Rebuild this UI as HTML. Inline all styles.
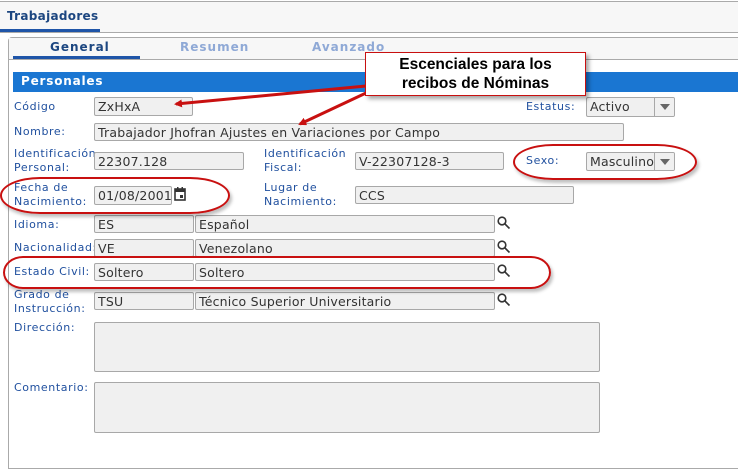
<!DOCTYPE html>
<html><head><meta charset="utf-8"><style>
body{margin:0;width:738px;height:449px;overflow:hidden;background:#fff;font-family:"DejaVu Sans",Verdana,sans-serif;position:relative}
.a{position:absolute}
.l{position:absolute;color:#1f4f9e;font-size:11px;letter-spacing:0.6px;line-height:14px;white-space:nowrap}
.i{position:absolute;background:#f0f0f0;border:1px solid #a8a8a8;border-radius:2px;box-sizing:border-box;font-size:12.5px;color:#333;padding-left:3px;padding-top:1px;line-height:15px;white-space:nowrap;overflow:hidden;font-family:"DejaVu Sans",sans-serif;letter-spacing:0.2px}
.dd{position:absolute;right:0;top:0;bottom:0;width:19px;border-left:1px solid #a8a8a8;background:#f0f0f0}
.dd:after{content:"";position:absolute;left:5px;top:6px;border-left:5px solid transparent;border-right:5px solid transparent;border-top:6px solid #666}
.ell{position:absolute;border:2px solid #c81010;border-radius:40px/50%;box-shadow:2px 3px 3px rgba(0,0,0,.25)}
</style></head><body>
<div class="a" style="left:0;top:1px;width:738px;height:30px;background:#f7f7f7;border-top:1px solid #aaa;border-bottom:1px solid #aaa"></div>
<div class="a" style="left:7px;top:9px;font-size:12px;font-weight:bold;color:#1c4680;letter-spacing:0.3px">Trabajadores</div>
<div class="a" style="left:0;top:29px;width:100px;height:3px;background:#1f55a8"></div>
<div class="a" style="left:8px;top:37px;width:740px;height:430px;border:1px solid #aaa;border-radius:4px 0 0 0"></div>
<div class="a" style="left:9px;top:38px;width:729px;height:21px;background:#f7f7f7;border-bottom:1px solid #aaa"></div>
<div class="a" style="left:50px;top:40px;font-size:12px;font-weight:bold;color:#1c4680;letter-spacing:1px">General</div>
<div class="a" style="left:180px;top:40px;font-size:12px;font-weight:bold;color:#8fa9d6;letter-spacing:1px">Resumen</div>
<div class="a" style="left:312px;top:40px;font-size:12px;font-weight:bold;color:#8fa9d6;letter-spacing:1px">Avanzado</div>
<div class="a" style="left:13px;top:56px;width:127px;height:3px;background:#1f55a8"></div>
<div class="a" style="left:13px;top:72px;width:725px;height:20px;background:#1a76d2"></div>
<div class="a" style="left:21px;top:74px;font-size:12px;font-weight:bold;color:#fff;letter-spacing:0.8px">Personales</div>

<div class="l" style="left:14px;top:100px">Código</div>
<div class="i" style="left:94px;top:97px;width:99px;height:19px">ZxHxA</div>
<div class="l" style="left:526px;top:100px">Estatus:</div>
<div class="i" style="left:586px;top:97px;width:89px;height:20px">Activo<div class="dd"></div></div>
<div class="l" style="left:14px;top:125px">Nombre:</div>
<div class="i" style="left:94px;top:123px;width:530px;height:18px">Trabajador Jhofran Ajustes en Variaciones por Campo</div>

<div class="l" style="left:14px;top:147px">Identificación<br>Personal:</div>
<div class="i" style="left:94px;top:152px;width:150px;height:18px">22307.128</div>
<div class="l" style="left:264px;top:147px">Identificación<br>Fiscal:</div>
<div class="i" style="left:355px;top:152px;width:149px;height:18px">V-22307128-3</div>
<div class="l" style="left:526px;top:154px">Sexo:</div>
<div class="i" style="left:586px;top:152px;width:89px;height:19px">Masculino<div class="dd"></div></div>

<div class="l" style="left:14px;top:181px">Fecha de<br>Nacimiento:</div>
<div class="i" style="left:94px;top:186px;width:78px;height:19px">01/08/2001</div>
<svg class="a" style="left:174px;top:187px" width="12" height="14" viewBox="0 0 12 14"><rect x="1" y="2" width="10" height="11" fill="none" stroke="#333" stroke-width="1.6"/><rect x="1" y="2" width="10" height="3" fill="#333"/><rect x="3" y="0" width="1.5" height="3" fill="#333"/><rect x="7.5" y="0" width="1.5" height="3" fill="#333"/><rect x="6" y="8" width="3" height="3" fill="#333"/></svg>
<div class="l" style="left:264px;top:181px">Lugar de<br>Nacimiento:</div>
<div class="i" style="left:355px;top:186px;width:219px;height:18px">CCS</div>

<div class="l" style="left:14px;top:218px">Idioma:</div>
<div class="i" style="left:94px;top:215px;width:100px;height:18px">ES</div>
<div class="i" style="left:195px;top:215px;width:300px;height:18px">Español</div>
<div class="l" style="left:14px;top:241px">Nacionalidad:</div>
<div class="i" style="left:94px;top:239px;width:100px;height:18px">VE</div>
<div class="i" style="left:195px;top:239px;width:300px;height:18px">Venezolano</div>
<div class="l" style="left:14px;top:265px">Estado Civil:</div>
<div class="i" style="left:94px;top:263px;width:100px;height:18px">Soltero</div>
<div class="i" style="left:195px;top:263px;width:300px;height:18px">Soltero</div>
<div class="l" style="left:14px;top:288px">Grado de<br>Instrucción:</div>
<div class="i" style="left:94px;top:292px;width:100px;height:18px">TSU</div>
<div class="i" style="left:195px;top:292px;width:300px;height:18px">Técnico Superior Universitario</div>
<svg class="a" style="left:497px;top:216px" width="14" height="100" viewBox="0 0 14 100">
<g fill="none" stroke="#333" stroke-width="1.6"><circle cx="5" cy="5" r="3.8"/><path d="M8 8l4.5 4.5"/><circle cx="5" cy="29" r="3.8"/><path d="M8 32l4.5 4.5"/><circle cx="5" cy="53" r="3.8"/><path d="M8 56l4.5 4.5"/><circle cx="5" cy="82" r="3.8"/><path d="M8 85l4.5 4.5"/></g></svg>

<div class="l" style="left:14px;top:321px">Dirección:</div>
<div class="i" style="left:94px;top:322px;width:506px;height:50px"></div>
<div class="l" style="left:14px;top:381px">Comentario:</div>
<div class="i" style="left:94px;top:382px;width:506px;height:51px"></div>

<div class="ell" style="left:0;top:177px;width:226px;height:33px"></div>
<div class="ell" style="left:3px;top:256px;width:544px;height:29px;border-radius:20px/50%"></div>
<div class="ell" style="left:513px;top:144px;width:180px;height:32px"></div>

<svg class="a" style="left:0;top:0" width="738" height="449">
<defs><marker id="m" markerWidth="8" markerHeight="8" refX="6" refY="4" orient="auto" markerUnits="userSpaceOnUse"><path d="M0 0L8 4L0 8z" fill="#c81010"/></marker></defs>
<line x1="366" y1="86" x2="176" y2="104" stroke="#c81010" stroke-width="3" marker-end="url(#m)"/>
<line x1="366" y1="93" x2="300" y2="124" stroke="#c81010" stroke-width="3" marker-end="url(#m)"/>
</svg>
<div class="a" style="left:365px;top:52px;width:221px;height:44px;box-sizing:border-box;background:#fff;border:1px solid #c81010;box-shadow:3px 3px 4px rgba(0,0,0,.35);text-align:center;font-family:'Liberation Sans',Arial,sans-serif;font-weight:bold;font-size:15.5px;line-height:19px;padding-top:2px;color:#000">Escenciales para los<br>recibos de Nóminas</div>
</body></html>
